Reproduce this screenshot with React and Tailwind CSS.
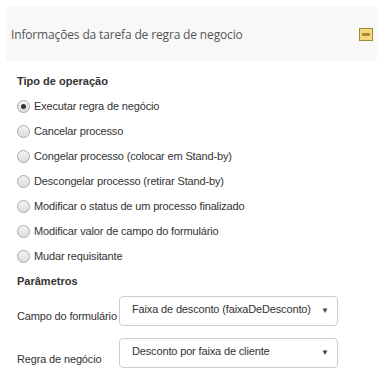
import React, { useState } from "react";

const options = [
  "Executar regra de negócio",
  "Cancelar processo",
  "Congelar processo (colocar em Stand-by)",
  "Descongelar processo (retirar Stand-by)",
  "Modificar o status de um processo finalizado",
  "Modificar valor de campo do formulário",
  "Mudar requisitante",
];

function Radio({ checked }) {
  return (
    <span className="w-[13px] h-[13px] rounded-full border border-[#a9a9a9] bg-gradient-to-b from-[#f4f4f4] to-[#dcdcdc] flex items-center justify-center shrink-0">
      {checked && <span className="w-[5px] h-[5px] rounded-full bg-[#333]" />}
    </span>
  );
}

function Select({ value }) {
  return (
    <div className="w-[219px] h-[30px] border border-[#ccc] rounded-[4px] bg-white flex items-center justify-between pl-[12px] pr-[8px] pb-[3px]">
      <span className="text-[11px] tracking-[-0.15px] text-[#333] whitespace-nowrap">{value}</span>
      <span className="text-[8px] text-[#444] pt-[2px]">▼</span>
    </div>
  );
}

export default function App() {
  const [selected, setSelected] = useState(0);

  return (
    <div className="w-[386px] h-[385px] bg-white pt-[7px] font-['Liberation_Sans',Arial,sans-serif]">
      <div className="mx-[6px] w-[371px] h-[54px] bg-[#f8f8f8] rounded-[3px] flex items-center justify-between pl-[5px] pr-[4px]">
        <span className="font-['Open_Sans',sans-serif] text-[12px] tracking-[-0.15px] text-[#555] pt-[2px]">
          Informações da tarefa de regra de negocio
        </span>
        <span className="w-[14px] h-[13px] border border-[#a08a3a] bg-[#f6d77a] flex items-center justify-center">
          <span className="w-[8px] h-[3px] bg-[#a08a3a] rounded-[1px]" />
        </span>
      </div>

      <div className="pl-[17px] pt-[13px]">
        <div className="text-[11px] font-bold text-[#333] h-[14px] leading-[14px]">
          Tipo de operação
        </div>
        <div className="mt-[6px]">
          {options.map((opt, i) => (
            <label
              key={opt}
              onClick={() => setSelected(i)}
              className="h-[25px] flex items-center gap-[4px] cursor-pointer"
            >
              <Radio checked={selected === i} />
              <span className="text-[11px] tracking-[-0.15px] text-[#333]">{opt}</span>
            </label>
          ))}
        </div>
        <div className="text-[11px] font-bold text-[#333] mt-[5px] h-[14px] leading-[14px]">
          Parâmetros
        </div>

        <div className="mt-[8px] flex items-end">
          <span className="w-[102px] text-[11px] tracking-[-0.15px] text-[#333] pb-[2px] whitespace-nowrap">Campo do formulário</span>
          <Select value="Faixa de desconto (faixaDeDesconto)" />
        </div>
        <div className="mt-[12px] flex items-end">
          <span className="w-[102px] text-[11px] tracking-[-0.15px] text-[#333] pb-[1px] whitespace-nowrap">Regra de negócio</span>
          <Select value="Desconto por faixa de cliente" />
        </div>
      </div>
    </div>
  );
}
